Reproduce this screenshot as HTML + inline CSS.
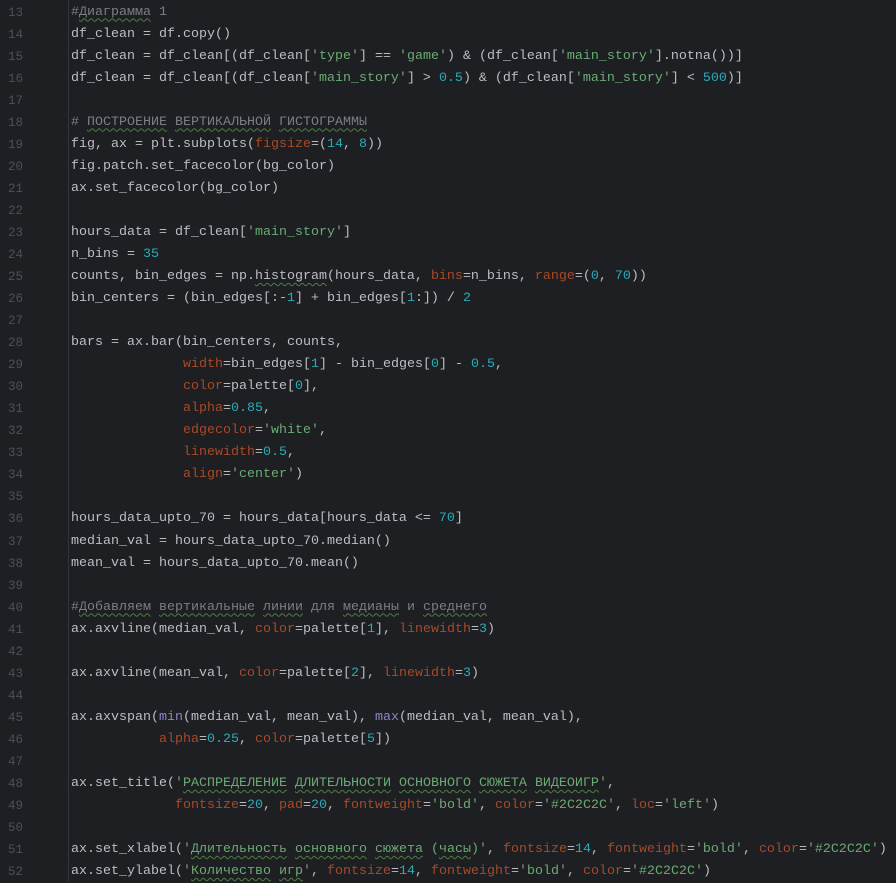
<!DOCTYPE html>
<html><head><meta charset="utf-8"><style>
html,body{margin:0;padding:0;background:#1e1f22;width:896px;height:882px;overflow:hidden}
.g{position:absolute;left:0;top:0;width:68px;height:882px;border-right:1px solid #313438}
.l{position:absolute;left:0;height:22px;line-height:22px;width:896px;font-family:"Liberation Mono","Noto Sans CJK SC",monospace;font-size:13.33px;white-space:pre;color:#bcbec4}
.n{position:absolute;left:0;width:23px;text-align:right;color:#4b5059;font-size:12.5px}
.c{position:absolute;left:71px}
.k{color:#aa4926}.d{color:#2aacb8}.s{color:#6aab73}.m{color:#7a7e85}.b{color:#8888c6}
.w{text-decoration:underline wavy #4e7d44;text-decoration-thickness:1px;text-underline-offset:3px}
</style></head><body>
<div class="g"></div>
<div class="l" style="top:1.5px"><span class="n">13</span><span class="c"><span class="m">#<span class="w">Диаграмма</span> 1</span></span></div>
<div class="l" style="top:23.5px"><span class="n">14</span><span class="c">df_clean = df.copy()</span></div>
<div class="l" style="top:45.6px"><span class="n">15</span><span class="c">df_clean = df_clean[(df_clean[<span class="s">'type'</span>] == <span class="s">'game'</span>) &amp; (df_clean[<span class="s">'main_story'</span>].notna())]</span></div>
<div class="l" style="top:67.6px"><span class="n">16</span><span class="c">df_clean = df_clean[(df_clean[<span class="s">'main_story'</span>] &gt; <span class="d">0.5</span>) &amp; (df_clean[<span class="s">'main_story'</span>] &lt; <span class="d">500</span>)]</span></div>
<div class="l" style="top:89.7px"><span class="n">17</span></div>
<div class="l" style="top:111.7px"><span class="n">18</span><span class="c"><span class="m"># <span class="w">ПОСТРОЕНИЕ</span> <span class="w">ВЕРТИКАЛЬНОЙ</span> <span class="w">ГИСТОГРАММЫ</span></span></span></div>
<div class="l" style="top:133.7px"><span class="n">19</span><span class="c">fig, ax = plt.subplots(<span class="k">figsize</span>=(<span class="d">14</span>, <span class="d">8</span>))</span></div>
<div class="l" style="top:155.8px"><span class="n">20</span><span class="c">fig.patch.set_facecolor(bg_color)</span></div>
<div class="l" style="top:177.8px"><span class="n">21</span><span class="c">ax.set_facecolor(bg_color)</span></div>
<div class="l" style="top:199.9px"><span class="n">22</span></div>
<div class="l" style="top:221.9px"><span class="n">23</span><span class="c">hours_data = df_clean[<span class="s">'main_story'</span>]</span></div>
<div class="l" style="top:243.9px"><span class="n">24</span><span class="c">n_bins = <span class="d">35</span></span></div>
<div class="l" style="top:266px"><span class="n">25</span><span class="c">counts, bin_edges = np.<span class="w">histogram</span>(hours_data, <span class="k">bins</span>=n_bins, <span class="k">range</span>=(<span class="d">0</span>, <span class="d">70</span>))</span></div>
<div class="l" style="top:288px"><span class="n">26</span><span class="c">bin_centers = (bin_edges[:-<span class="d">1</span>] + bin_edges[<span class="d">1</span>:]) / <span class="d">2</span></span></div>
<div class="l" style="top:310.1px"><span class="n">27</span></div>
<div class="l" style="top:332.1px"><span class="n">28</span><span class="c">bars = ax.bar(bin_centers, counts,</span></div>
<div class="l" style="top:354.1px"><span class="n">29</span><span class="c">              <span class="k">width</span>=bin_edges[<span class="d">1</span>] - bin_edges[<span class="d">0</span>] - <span class="d">0.5</span>,</span></div>
<div class="l" style="top:376.2px"><span class="n">30</span><span class="c">              <span class="k">color</span>=palette[<span class="d">0</span>],</span></div>
<div class="l" style="top:398.2px"><span class="n">31</span><span class="c">              <span class="k">alpha</span>=<span class="d">0.85</span>,</span></div>
<div class="l" style="top:420.3px"><span class="n">32</span><span class="c">              <span class="k">edgecolor</span>=<span class="s">'white'</span>,</span></div>
<div class="l" style="top:442.3px"><span class="n">33</span><span class="c">              <span class="k">linewidth</span>=<span class="d">0.5</span>,</span></div>
<div class="l" style="top:464.3px"><span class="n">34</span><span class="c">              <span class="k">align</span>=<span class="s">'center'</span>)</span></div>
<div class="l" style="top:486.4px"><span class="n">35</span></div>
<div class="l" style="top:508.4px"><span class="n">36</span><span class="c">hours_data_upto_70 = hours_data[hours_data &lt;= <span class="d">70</span>]</span></div>
<div class="l" style="top:530.5px"><span class="n">37</span><span class="c">median_val = hours_data_upto_70.median()</span></div>
<div class="l" style="top:552.5px"><span class="n">38</span><span class="c">mean_val = hours_data_upto_70.mean()</span></div>
<div class="l" style="top:574.5px"><span class="n">39</span></div>
<div class="l" style="top:596.6px"><span class="n">40</span><span class="c"><span class="m">#<span class="w">Добавляем</span> <span class="w">вертикальные</span> <span class="w">линии</span> для <span class="w">медианы</span> и <span class="w">среднего</span></span></span></div>
<div class="l" style="top:618.6px"><span class="n">41</span><span class="c">ax.axvline(median_val, <span class="k">color</span>=palette[<span class="d">1</span>], <span class="k">linewidth</span>=<span class="d">3</span>)</span></div>
<div class="l" style="top:640.7px"><span class="n">42</span></div>
<div class="l" style="top:662.7px"><span class="n">43</span><span class="c">ax.axvline(mean_val, <span class="k">color</span>=palette[<span class="d">2</span>], <span class="k">linewidth</span>=<span class="d">3</span>)</span></div>
<div class="l" style="top:684.7px"><span class="n">44</span></div>
<div class="l" style="top:706.8px"><span class="n">45</span><span class="c">ax.axvspan(<span class="b">min</span>(median_val, mean_val), <span class="b">max</span>(median_val, mean_val),</span></div>
<div class="l" style="top:728.8px"><span class="n">46</span><span class="c">           <span class="k">alpha</span>=<span class="d">0.25</span>, <span class="k">color</span>=palette[<span class="d">5</span>])</span></div>
<div class="l" style="top:750.9px"><span class="n">47</span></div>
<div class="l" style="top:772.9px"><span class="n">48</span><span class="c">ax.set_title(<span class="s">'<span class="w">РАСПРЕДЕЛЕНИЕ</span> <span class="w">ДЛИТЕЛЬНОСТИ</span> <span class="w">ОСНОВНОГО</span> <span class="w">СЮЖЕТА</span> <span class="w">ВИДЕОИГР</span>'</span>,</span></div>
<div class="l" style="top:794.9px"><span class="n">49</span><span class="c">             <span class="k">fontsize</span>=<span class="d">20</span>, <span class="k">pad</span>=<span class="d">20</span>, <span class="k">fontweight</span>=<span class="s">'bold'</span>, <span class="k">color</span>=<span class="s">'#2C2C2C'</span>, <span class="k">loc</span>=<span class="s">'left'</span>)</span></div>
<div class="l" style="top:817px"><span class="n">50</span></div>
<div class="l" style="top:839px"><span class="n">51</span><span class="c">ax.set_xlabel(<span class="s">'<span class="w">Длительность</span> <span class="w">основного</span> <span class="w">сюжета</span> (<span class="w">часы</span>)'</span>, <span class="k">fontsize</span>=<span class="d">14</span>, <span class="k">fontweight</span>=<span class="s">'bold'</span>, <span class="k">color</span>=<span class="s">'#2C2C2C'</span>)</span></div>
<div class="l" style="top:861px"><span class="n">52</span><span class="c">ax.set_ylabel(<span class="s">'<span class="w">Количество</span> <span class="w">игр</span>'</span>, <span class="k">fontsize</span>=<span class="d">14</span>, <span class="k">fontweight</span>=<span class="s">'bold'</span>, <span class="k">color</span>=<span class="s">'#2C2C2C'</span>)</span></div>
</body></html>
